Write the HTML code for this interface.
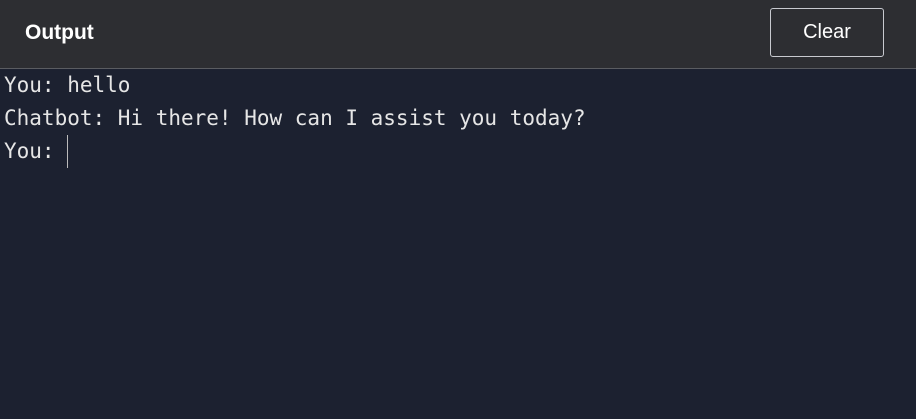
<!DOCTYPE html>
<html><head><style>
html,body{margin:0;padding:0;width:916px;height:419px;overflow:hidden;background:#1c2130;}
.hdr{position:absolute;left:0;top:0;width:916px;height:68px;background:#2d2e32;border-bottom:1px solid #5a5c61;}
.title{position:absolute;left:25px;top:21px;color:#fff;font:bold 21px "Liberation Sans",sans-serif;}
.btn{position:absolute;left:770px;top:8px;width:112px;height:47px;border:1px solid #c8cad0;border-radius:3px;color:#fff;font:20px "Liberation Sans",sans-serif;text-align:center;line-height:47px;}
.out{position:absolute;left:4px;top:69px;color:#e6e6e6;font:21px "DejaVu Sans Mono",monospace;line-height:33px;white-space:pre;}
.cur{display:inline-block;width:1px;height:33px;background:#bbb;vertical-align:top;}
</style></head><body>
<div class="hdr"><div class="title">Output</div><div class="btn">Clear</div></div>
<div class="out">You: hello
Chatbot: Hi there! How can I assist you today?
You: <span class="cur"></span></div>
</body></html>
